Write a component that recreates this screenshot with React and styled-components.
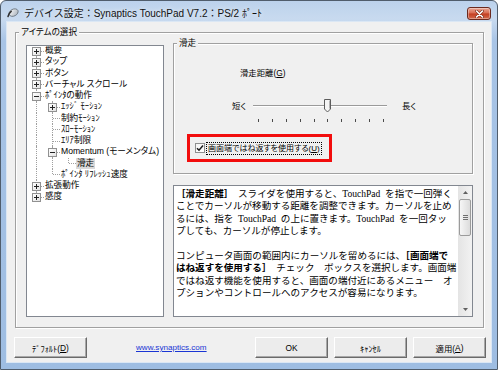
import React from "react";
import styled, { createGlobalStyle, css } from "styled-components";

const UI_FONT = `"Liberation Sans", "Noto Sans CJK JP", sans-serif`;

const GlobalStyle = createGlobalStyle`
  html, body { margin: 0; padding: 0; }
  body { background: #ffffff; font-family: ${UI_FONT}; }
`;

const Window = styled.div`
  width: 498px;
  height: 370px;
  box-sizing: border-box;
  border: 1px solid #505d6c;
  border-radius: 6px 6px 0 0;
  background: linear-gradient(180deg, #bcd2ec 0px, #c8daef 18px, #a8c4e6 40px, #9ebde2 100%);
  display: flex;
  flex-direction: column;
  overflow: hidden;
`;

const TitleBar = styled.div`
  flex: none;
  height: 21px;
  box-sizing: border-box;
  padding: 2px 0 0 5px;
  display: flex;
  align-items: center;
`;

const TitleText = styled.span`
  margin-left: 5px;
  font-size: 10px;
  color: #111;
  white-space: nowrap;
  text-shadow: 0 0 5px rgba(255, 255, 255, 0.9);
`;

const CloseButton = styled.div`
  align-self: flex-start;
  margin: 4px 6px 0 auto;
  width: 24px;
  height: 13px;
  box-sizing: border-box;
  border: 1px solid #6b2a1f;
  border-radius: 3px;
  background: linear-gradient(180deg, #e9a896 0%, #d8694f 48%, #c33d20 52%, #d36a4c 100%);
  box-shadow: inset 0 0 0 1px rgba(255, 255, 255, 0.35);
  display: flex;
  align-items: center;
  justify-content: center;
`;

const Content = styled.div`
  flex: 1;
  margin: 0 6px 7px;
  background: #f0f0f0;
  box-shadow: 0 0 0 1px #dbe7f4;
  display: flex;
  flex-direction: column;
  padding: 0 7px 0 8px;
`;

const Group = styled.div`
  flex: none;
  display: flex;
  flex-direction: column;
  box-sizing: border-box;
  border: 1px solid #a0a0a0;
  box-shadow: inset 1px 1px 0 #fff, 1px 1px 0 #fff;
  margin-top: ${(p) => p.$top}px;
  height: ${(p) => p.$h}px;
`;

const GroupTitle = styled.div`
  align-self: flex-start;
  height: 12px;
  line-height: 12px;
  margin: -7px 0 0 3px;
  padding: 0 2px;
  background: #f0f0f0;
  font-size: 8.6px;
  font-feature-settings: "palt";
  color: #000;
  white-space: nowrap;
`;

const GroupBody = styled.div`
  flex: 1;
  display: flex;
  align-items: flex-start;
  gap: 9px;
  padding: 0 10px 10px;
`;

/* ---------- tree ---------- */

const Tree = styled.div`
  flex: none;
  width: 138px;
  height: 272px;
  margin-top: 7px;
  box-sizing: border-box;
  border: 1px solid #828790;
  background: #fff;
  padding-left: 1px;
  overflow: hidden;
`;

const TreeRows = styled.div`
  margin-top: -1px;
`;

const Row = styled.div`
  display: flex;
  height: 11.25px;
`;

const Guide = styled.span`
  position: relative;
  flex: none;
  width: 16px;
  ${(p) =>
    p.$line &&
    css`
      &::before {
        content: "";
        position: absolute;
        left: 8px;
        top: 0;
        bottom: 0;
        border-left: 1px dotted #a0a0a0;
      }
    `}
`;

const Connector = styled.span`
  position: relative;
  flex: none;
  width: 16px;
  &::before {
    content: "";
    position: absolute;
    left: 8px;
    top: ${(p) => (p.$first ? "50%" : "0")};
    bottom: ${(p) => (p.$last ? "50%" : "0")};
    border-left: 1px dotted #a0a0a0;
  }
  &::after {
    content: "";
    position: absolute;
    left: 9px;
    right: 0;
    top: 50%;
    border-top: 1px dotted #a0a0a0;
  }
`;

const Expander = styled.span`
  position: absolute;
  z-index: 1;
  left: 4px;
  top: calc(50% - 4px);
  width: 9px;
  height: 9px;
  box-sizing: border-box;
  border: 1px solid #919191;
  background: linear-gradient(135deg, #ffffff, #e2e2e2);
  &::before {
    content: "";
    position: absolute;
    left: 1px;
    right: 1px;
    top: 3px;
    height: 1px;
    background: #222;
  }
  ${(p) =>
    p.$plus &&
    css`
      &::after {
        content: "";
        position: absolute;
        left: 3px;
        top: 1px;
        bottom: 1px;
        width: 1px;
        background: #222;
      }
    `}
`;

const NodeLabel = styled.span`
  padding: 0 1px;
  line-height: 11.25px;
  font-size: 8.6px;
  font-feature-settings: "palt";
  color: #000;
  white-space: nowrap;
  background: ${(p) => (p.$selected ? "#d9d9d9" : "transparent")};
`;

/* ---------- right column ---------- */

const RightCol = styled.div`
  flex: none;
  width: 300px;
  display: flex;
  flex-direction: column;
`;

const SliderLabel = styled.div`
  margin: 18px 0 0 66px;
  font-size: 8.4px;
  line-height: 12px;
  font-feature-settings: "palt";
  color: #000;
`;

const SliderRow = styled.div`
  display: flex;
  align-items: flex-start;
  margin: 20px 0 0 58px;
`;

const RangeLabel = styled.span`
  flex: none;
  width: ${(p) => p.$w}px;
  margin-left: ${(p) => p.$ml || 0}px;
  font-size: 8.4px;
  line-height: 14px;
  font-feature-settings: "palt";
  color: #000;
`;

const Slider = styled.div`
  flex: none;
  width: 134px;
  display: flex;
  flex-direction: column;
`;

const TrackArea = styled.div`
  position: relative;
  height: 14px;
`;

const TrackLine = styled.div`
  margin-top: 6px;
  height: 0;
  border-top: 1px solid #9a9a9a;
  border-bottom: 1px solid #ffffff;
`;

const Thumb = styled.svg`
  position: absolute;
  left: 71px;
  top: 0;
`;

const Ticks = styled.div`
  display: flex;
  justify-content: space-between;
  margin-top: 6px;
  padding: 0 3px 0 5px;
  height: 3px;
`;

const Tick = styled.span`
  width: 1px;
  height: 3px;
  background: #4a4a4a;
`;

const Highlight = styled.div`
  margin: 12px 0 0 13px;
  width: 145px;
  height: 28px;
  box-sizing: border-box;
  border: 3px solid #f20d0d;
  display: flex;
  align-items: center;
  padding-left: 5px;
`;

const CheckBox = styled.span`
  flex: none;
  width: 10px;
  height: 10px;
  box-sizing: border-box;
  border: 1px solid #8e8f8f;
  background: linear-gradient(135deg, #f4f4f4, #ffffff);
  display: flex;
  align-items: center;
  justify-content: center;
`;

const CheckText = styled.span`
  margin-left: 1px;
  padding: 0 1px;
  border: 1px dotted #000;
  font-size: 8px;
  line-height: 11px;
  font-feature-settings: "palt";
  color: #000;
  white-space: nowrap;
`;

const Desc = styled.div`
  flex: none;
  margin-top: 11px;
  height: 132px;
  box-sizing: border-box;
  border: 1px solid #828790;
  background: #fff;
  display: flex;
`;

const DescText = styled.div`
  flex: 1;
  padding: 2px 0 0 2px;
  font-family: "Liberation Serif", "Noto Sans CJK JP", serif;
  font-size: 9.55px;
  line-height: 12.4px;
  word-spacing: 0.25em;
  white-space: nowrap;
  overflow: hidden;
  color: #000;
`;

const Line = styled.div`
  height: 12.4px;
`;

const B = styled.b`
  font-weight: 700;
`;

const ScrollBar = styled.div`
  flex: none;
  width: 14px;
  display: flex;
  flex-direction: column;
  background: linear-gradient(90deg, #e4e4e4, #f2f2f2);
`;

const ScrollArrow = styled.div`
  flex: none;
  height: 13px;
  display: flex;
  align-items: center;
  justify-content: center;
  margin-top: ${(p) => (p.$down ? "auto" : "0")};
`;

const ScrollThumb = styled.div`
  flex: none;
  height: 37px;
  margin: 0 1px;
  box-sizing: border-box;
  border: 1px solid #9b9b9b;
  border-radius: 2px;
  background: linear-gradient(90deg, #f6f6f6, #dcdcdc);
  display: flex;
  flex-direction: column;
  align-items: center;
  justify-content: center;
  gap: 1px;
`;

const Grip = styled.span`
  width: 5px;
  height: 1px;
  background: #6f6f6f;
`;

/* ---------- buttons ---------- */

const ButtonRow = styled.div`
  flex: none;
  display: flex;
  align-items: center;
  gap: 6px;
  height: 21px;
  margin: 9px -2px 0 -1px;
`;

const Button = styled.div`
  flex: none;
  width: 73px;
  height: 21px;
  box-sizing: border-box;
  border: 1px solid;
  border-color: #ffffff #6a6a6a #6a6a6a #ffffff;
  box-shadow: inset -1px -1px 0 #a8a8a8;
  background: #ececec;
  display: flex;
  align-items: center;
  justify-content: center;
  font-size: 8.4px;
  font-feature-settings: "palt";
  color: #000;
  white-space: nowrap;
  ${(p) => p.$push && css`margin-left: auto;`}
`;

const Link = styled.a`
  margin-left: 43px;
  font-family: "Liberation Sans", sans-serif;
  font-size: 8.1px;
  color: #1a35d4;
  text-decoration: underline;
`;

const tree = [
  { label: "概要", expand: "plus" },
  { label: "タップ", expand: "plus" },
  { label: "ボタン", expand: "plus" },
  { label: "バーチャル スクロール", expand: "plus" },
  {
    label: "ﾎﾟｲﾝﾀの動作",
    expand: "minus",
    children: [
      { label: "ｴｯｼﾞ ﾓｰｼｮﾝ", expand: "plus" },
      { label: "制約ﾓｰｼｮﾝ" },
      { label: "ｽﾛｰﾓｰｼｮﾝ" },
      { label: "ｴﾘｱ制限" },
      {
        label: "Momentum (モーメンタム)",
        expand: "minus",
        children: [{ label: "滑走", selected: true }],
      },
      { label: "ﾎﾟｲﾝﾀ ﾘﾌﾚｯｼｭ速度" },
    ],
  },
  { label: "拡張動作", expand: "plus" },
  { label: "感度", expand: "plus" },
];

function flatten(nodes, depth = 0, guides = [], out = []) {
  nodes.forEach((n, i) => {
    const last = i === nodes.length - 1;
    out.push({ ...n, guides, last, first: depth === 0 && i === 0 });
    if (n.children) flatten(n.children, depth + 1, [...guides, !last], out);
  });
  return out;
}

const rows = flatten(tree);

function TitleIcon() {
  return (
    <svg width="13" height="12" viewBox="0 0 13 12">
      <defs>
        <linearGradient id="mouseFill" x1="0" y1="0" x2="1" y2="1">
          <stop offset="0" stopColor="#ffffff" />
          <stop offset="1" stopColor="#a4adb7" />
        </linearGradient>
      </defs>
      <ellipse cx="7.6" cy="5.6" rx="4.8" ry="3.4" transform="rotate(-28 7.6 5.6)" fill="url(#mouseFill)" stroke="#66707b" strokeWidth="0.8" />
      <path d="M2 9.5 C2.6 7.2 3.6 5.6 5.2 4.4" stroke="#2e2e2e" strokeWidth="1.5" fill="none" strokeLinecap="round" />
    </svg>
  );
}

export default function App() {
  return (
    <>
      <GlobalStyle />
      <Window>
        <TitleBar>
          <TitleIcon />
          <TitleText>デバイス設定：Synaptics TouchPad V7.2：PS/2 ﾎﾟｰﾄ</TitleText>
          <CloseButton>
            <svg width="9" height="8" viewBox="0 0 9 8">
              <path d="M1.5 1l6 6M7.5 1l-6 6" stroke="#7a2a1a" strokeWidth="2.8" strokeLinecap="round" />
              <path d="M1.5 1l6 6M7.5 1l-6 6" stroke="#ffffff" strokeWidth="1.6" strokeLinecap="round" />
            </svg>
          </CloseButton>
        </TitleBar>

        <Content>
          <Group $top={10} $h={296}>
            <GroupTitle>アイテムの選択</GroupTitle>
            <GroupBody>
              <Tree>
                <TreeRows>
                  {rows.map((r, i) => (
                    <Row key={i}>
                      {r.guides.map((g, j) => (
                        <Guide key={j} $line={g} />
                      ))}
                      <Connector $first={r.first} $last={r.last}>
                        {r.expand && <Expander $plus={r.expand === "plus"} />}
                      </Connector>
                      <NodeLabel $selected={r.selected}>{r.label}</NodeLabel>
                    </Row>
                  ))}
                </TreeRows>
              </Tree>

              <RightCol>
                <Group $top={5} $h={131}>
                  <GroupTitle>滑走</GroupTitle>
                  <SliderLabel>
                    滑走距離(<u>G</u>)
                  </SliderLabel>
                  <SliderRow>
                    <RangeLabel $w={21}>短く</RangeLabel>
                    <Slider>
                      <TrackArea>
                        <TrackLine />
                        <Thumb width="8" height="14" viewBox="0 0 8 14">
                          <path d="M0.5 0.5H6.5V10L3.5 13L0.5 10Z" fill="#f4f4f4" stroke="#5c5c5c" />
                          <path d="M5.5 1.5V9.6" stroke="#b4b4b4" />
                        </Thumb>
                      </TrackArea>
                      <Ticks>
                        {Array.from({ length: 10 }).map((_, i) => (
                          <Tick key={i} />
                        ))}
                      </Ticks>
                    </Slider>
                    <RangeLabel $w={20} $ml={15}>長く</RangeLabel>
                  </SliderRow>
                  <Highlight>
                    <CheckBox>
                      <svg width="8" height="8" viewBox="0 0 8 8">
                        <path d="M1 4.2L3 6.2L7 1.5" stroke="#1c1c1c" strokeWidth="1.5" fill="none" />
                      </svg>
                    </CheckBox>
                    <CheckText>
                      画面端ではね返すを使用する(<u>U</u>)
                    </CheckText>
                  </Highlight>
                </Group>

                <Desc>
                  <DescText>
                    <Line>
                      <B>［滑走距離］</B> スライダを使用すると、TouchPad を指で一回弾く
                    </Line>
                    <Line>ことでカーソルが移動する距離を調整できます。カーソルを止め</Line>
                    <Line>るには、指を TouchPad の上に置きます。TouchPad を一回タッ</Line>
                    <Line>プしても、カーソルが停止します。</Line>
                    <Line />
                    <Line>
                      コンピュータ画面の範囲内にカーソルを留めるには、<B>［画面端で</B>
                    </Line>
                    <Line>
                      <B>はね返すを使用する］</B> チェック　ボックスを選択します。画面端
                    </Line>
                    <Line>ではね返す機能を使用すると、画面の端付近にあるメニュー　オ</Line>
                    <Line>プションやコントロールへのアクセスが容易になります。</Line>
                  </DescText>
                  <ScrollBar>
                    <ScrollArrow>
                      <svg width="5" height="3" viewBox="0 0 5 3">
                        <path d="M0 3L2.5 0L5 3Z" fill="#606060" />
                      </svg>
                    </ScrollArrow>
                    <ScrollThumb>
                      <Grip />
                      <Grip />
                      <Grip />
                    </ScrollThumb>
                    <ScrollArrow $down>
                      <svg width="5" height="3" viewBox="0 0 5 3">
                        <path d="M0 0L2.5 3L5 0Z" fill="#606060" />
                      </svg>
                    </ScrollArrow>
                  </ScrollBar>
                </Desc>
              </RightCol>
            </GroupBody>
          </Group>

          <ButtonRow>
            <Button>
              ﾃﾞﾌｫﾙﾄ(<u>D</u>)
            </Button>
            <Link href="#">www.synaptics.com</Link>
            <Button $push>OK</Button>
            <Button>ｷｬﾝｾﾙ</Button>
            <Button>
              適用(<u>A</u>)
            </Button>
          </ButtonRow>
        </Content>
      </Window>
    </>
  );
}
